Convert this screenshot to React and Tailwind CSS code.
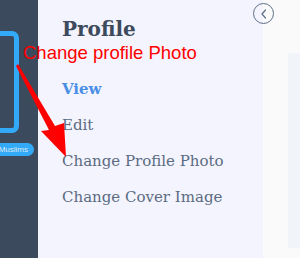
import React from 'react';

const menu = [
  { label: 'View', active: true },
  { label: 'Edit' },
  { label: 'Change Profile Photo' },
  { label: 'Change Cover Image' },
];

const App = () => {
  return (
    <div className="relative flex w-[300px] h-[258px] overflow-hidden bg-[#fafafa]" style={{ fontFamily: '"DejaVu Serif", serif' }}>
      {/* sidebar (cut off) */}
      <div className="w-[38px] shrink-0 bg-[#3c4a5d] flex flex-col pt-[31px]">
        <div className="ml-[-20px] w-[39px] h-[102px] rounded-[7px] border-[5px] border-[#33aaf7]" />
        <div className="ml-[-8px] mt-[10px] w-[42px] h-[13px] rounded-full bg-[#33aaf7] flex items-center justify-end pr-[6px]">
          <span className="text-[8px] leading-none text-[#dbe8f5]" style={{ fontFamily: '"Liberation Sans", sans-serif' }}>Muslims</span>
        </div>
      </div>

      {/* profile menu */}
      <div className="w-[225px] shrink-0 bg-[#f3f4fd] pl-[24px] pt-[16px]">
        <h2 className="text-[20px] leading-[26px] font-bold text-[#3d4a5c]">Profile</h2>
        <div className="mt-[29px] flex flex-col">
          {menu.map((m) => (
            <div
              key={m.label}
              className={`h-[36px] flex items-center text-[15px] ${m.active ? 'font-bold text-[#4a8ee6]' : 'text-[#5b6b82]'}`}
            >
              {m.label}
            </div>
          ))}
        </div>
      </div>

      {/* content */}
      <div className="flex-1 pt-[53px] pl-[25px] pb-[10px]">
        <div className="h-full bg-[#f1f4f9]" />
      </div>

      {/* back button */}
      <div className="absolute left-[253px] top-[3px] w-[21px] h-[21px] rounded-full border-[1.5px] border-[#5e6f86] flex items-center justify-center">
        <svg width="10" height="12" viewBox="0 0 10 12" fill="none" stroke="#5e6f86" strokeWidth="1.2" strokeLinecap="round" strokeLinejoin="round">
          <path d="M6.5 2 L3 6 L6.5 10" />
        </svg>
      </div>

      {/* annotation */}
      <div className="absolute left-[23px] top-[41px] text-[18.5px] leading-[24px] text-[#ff0000] whitespace-nowrap" style={{ fontFamily: '"Liberation Sans", sans-serif' }}>
        Change profile Photo
      </div>
      <svg className="absolute left-0 top-0" width="300" height="258" viewBox="0 0 300 258">
        <polygon points="16,66 18,64 55,126 64,123 66,157 41,131 49,130" fill="#ff0000" />
      </svg>
    </div>
  );
};

export default App;
